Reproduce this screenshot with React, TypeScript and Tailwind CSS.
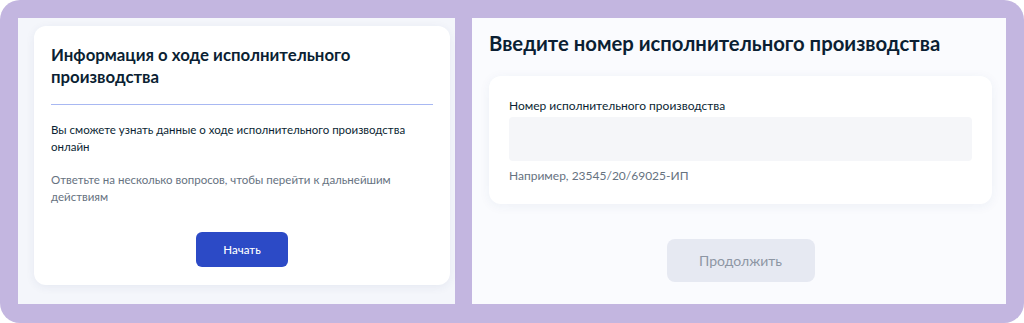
import React from 'react'

export default function App() {
  return (
    <div
      className="w-[1024px] h-[323px] bg-[#c3b6e0] rounded-[20px] p-[18px] flex gap-[17px] overflow-hidden"
      style={{ fontFamily: 'Lato, "Noto Sans", sans-serif' }}
    >
      {/* left screen */}
      <div className="w-[437px] h-[286px] bg-[#f4f6fb] pl-4 pr-[5px] pt-2">
        <div className="bg-white rounded-xl shadow-[0_2px_10px_rgba(40,60,120,0.07)] px-[17px] pt-[18px] pb-[18px]">
          <h1 className="text-[16.8px] leading-[22px] font-bold text-[#0b1f33]">
            Информация о ходе исполнительного производства
          </h1>
          <div className="mt-[16px] h-px bg-[#a8b8f2]" />
          <p className="mt-4 text-[11.5px] leading-[17px] text-[#0b1f33]">
            Вы сможете узнать данные о ходе исполнительного производства онлайн
          </p>
          <p className="mt-4 text-[11.5px] leading-[17px] text-[#66727f]">
            Ответьте на несколько вопросов, чтобы перейти к дальнейшим действиям
          </p>
          <div className="flex justify-center mt-[27px]">
            <button className="w-[92px] h-[35px] rounded-md bg-[#2c4ac6] text-white text-[11.5px] font-medium">
              Начать
            </button>
          </div>
        </div>
      </div>

      {/* right screen */}
      <div className="flex-1 h-[286px] bg-[#fafbfe] pl-[17px] pr-[14px] pt-3">
        <h2 className="text-[20.3px] leading-[26px] font-bold text-[#0b1f33]">
          Введите номер исполнительного производства
        </h2>
        <div className="mt-5 bg-white rounded-xl shadow-[0_2px_12px_rgba(40,60,120,0.06)] px-5 pt-[22px] pb-5">
          <div className="text-[12px] leading-4 text-[#0b1f33]">Номер исполнительного производства</div>
          <div className="mt-[3px] h-11 rounded bg-[#f5f6f9]" />
          <div className="mt-[7px] text-[12px] leading-4 text-[#66727f]">Например, 23545/20/69025-ИП</div>
        </div>
        <div className="flex justify-center mt-[35px]">
          <button className="w-[148px] h-[43px] rounded-lg bg-[#e6e9f2] text-[#8d96a4] text-[14px]">
            Продолжить
          </button>
        </div>
      </div>
    </div>
  )
}
